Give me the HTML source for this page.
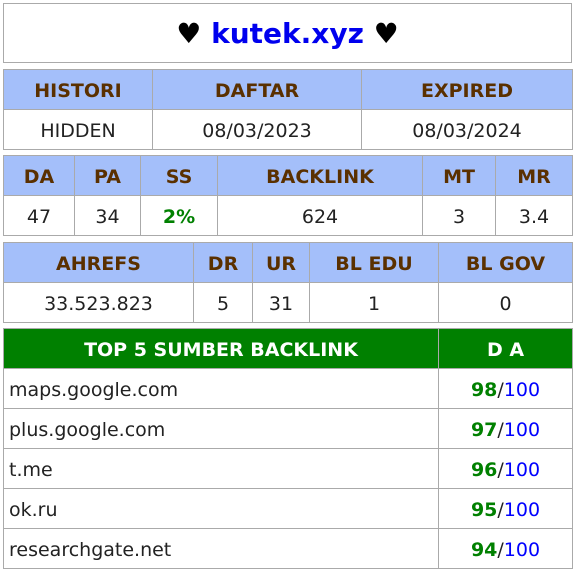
<!DOCTYPE html>
<html><head><style>
body{margin:0;background:#fff;font-family:"DejaVu Sans","Liberation Sans",sans-serif;}
.box{position:absolute;left:3px;width:569px;box-sizing:border-box;}
table{position:absolute;left:3px;width:570px;border-collapse:collapse;table-layout:fixed;}
td{border:1px solid #aaa;text-align:center;height:37px;padding:2px 0 0;font-size:19px;color:#222;}
th{border:1px solid #aaa;background:#a4bffa;color:#5a3000;height:37px;padding:2px 0 0;font-size:19px;font-weight:bold;}
.g{color:#008000;font-weight:bold}
.b{color:#0000ff}
td.l{text-align:left;padding-left:5px;}
</style></head><body>
<div class="box" style="top:3px;height:60px;border:1px solid #aaa;text-align:center;line-height:60px;font-size:28px;font-weight:bold;color:#000">♥ <span style="color:#0000ee">kutek.xyz</span> ♥</div>
<table style="top:69px"><colgroup><col style="width:149px"><col style="width:209px"><col style="width:211px"></colgroup>
<tr><th>HISTORI</th><th>DAFTAR</th><th>EXPIRED</th></tr>
<tr><td>HIDDEN</td><td>08/03/2023</td><td>08/03/2024</td></tr></table>
<table style="top:155px"><colgroup><col style="width:71px"><col style="width:66px"><col style="width:77px"><col style="width:205px"><col style="width:73px"><col style="width:77px"></colgroup>
<tr><th>DA</th><th>PA</th><th>SS</th><th>BACKLINK</th><th>MT</th><th>MR</th></tr>
<tr><td>47</td><td>34</td><td class="g">2%</td><td>624</td><td>3</td><td>3.4</td></tr></table>
<table style="top:242px"><colgroup><col style="width:190px"><col style="width:59px"><col style="width:57px"><col style="width:129px"><col style="width:134px"></colgroup>
<tr><th>AHREFS</th><th>DR</th><th>UR</th><th>BL EDU</th><th>BL GOV</th></tr>
<tr><td>33.523.823</td><td>5</td><td>31</td><td>1</td><td>0</td></tr></table>
<table style="top:328px"><colgroup><col style="width:435px"><col style="width:134px"></colgroup>
<tr><th style="background:#008000;color:#fff">TOP 5 SUMBER BACKLINK</th><th style="background:#008000;color:#fff">D A</th></tr>
<tr><td class="l">maps.google.com</td><td><span class="g">98</span>/<span class="b">100</span></td></tr>
<tr><td class="l">plus.google.com</td><td><span class="g">97</span>/<span class="b">100</span></td></tr>
<tr><td class="l">t.me</td><td><span class="g">96</span>/<span class="b">100</span></td></tr>
<tr><td class="l">ok.ru</td><td><span class="g">95</span>/<span class="b">100</span></td></tr>
<tr><td class="l">researchgate.net</td><td><span class="g">94</span>/<span class="b">100</span></td></tr>
</table>
</body></html>
